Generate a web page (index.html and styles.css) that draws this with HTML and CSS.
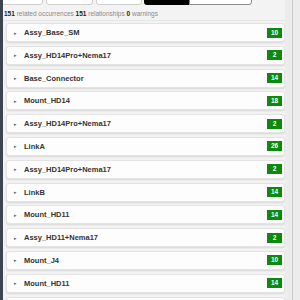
FILE: index.html
```html
<!DOCTYPE html>
<html>
<head>
<meta charset="utf-8">
<link rel="stylesheet" href="styles.css">
</head>
<body>
<div class="frame">
  <div class="main">
    <div class="toolbar">
      <div class="btn b1"></div>
      <div class="btn b2"></div>
      <div class="btn b3"></div>
      <div class="seg">
        <div class="seg-on"></div>
        <div class="seg-off"></div>
      </div>
    </div>
    <div class="summary"><b>151</b> related occurrences <b>151</b> relationships <b>0</b> warnings</div>
    <div class="list">
      <div class="card"><span class="tri">&#9656;</span><span class="name">Assy_Base_SM</span><span class="badge">10</span></div>
      <div class="card"><span class="tri">&#9656;</span><span class="name">Assy_HD14Pro+Nema17</span><span class="badge">2</span></div>
      <div class="card"><span class="tri">&#9656;</span><span class="name">Base_Connector</span><span class="badge">14</span></div>
      <div class="card"><span class="tri">&#9656;</span><span class="name">Mount_HD14</span><span class="badge">18</span></div>
      <div class="card"><span class="tri">&#9656;</span><span class="name">Assy_HD14Pro+Nema17</span><span class="badge">2</span></div>
      <div class="card"><span class="tri">&#9656;</span><span class="name">LinkA</span><span class="badge">26</span></div>
      <div class="card"><span class="tri">&#9656;</span><span class="name">Assy_HD14Pro+Nema17</span><span class="badge">2</span></div>
      <div class="card"><span class="tri">&#9656;</span><span class="name">LinkB</span><span class="badge">14</span></div>
      <div class="card"><span class="tri">&#9656;</span><span class="name">Mount_HD11</span><span class="badge">14</span></div>
      <div class="card"><span class="tri">&#9656;</span><span class="name">Assy_HD11+Nema17</span><span class="badge">2</span></div>
      <div class="card"><span class="tri">&#9656;</span><span class="name">Mount_J4</span><span class="badge">10</span></div>
      <div class="card"><span class="tri">&#9656;</span><span class="name">Mount_HD11</span><span class="badge">14</span></div>
      <div class="card"></div>
    </div>
  </div>
  <div class="rail"><div class="rail-line"></div></div>
</div>
</body>
</html>
```
FILE: styles.css
```css
html, body {
  margin: 0;
  padding: 0;
  width: 300px;
  height: 300px;
  overflow: hidden;
  background: #f3f3f3;
  font-family: "Liberation Sans", Arial, sans-serif;
}
.frame {
  display: flex;
  height: 300px;
  border-left: 3px solid #3e4350;
}
.main {
  width: 282px;
  flex: none;
  overflow: hidden;
}
.rail {
  flex: 1;
  background: #ececec;
  display: flex;
  justify-content: center;
}
.rail-line {
  width: 1px;
  background: #c9c9c9;
}
.toolbar {
  display: flex;
  gap: 3px;
  margin-top: -10px;
  height: 15px;
}
.btn {
  background: #fff;
  border: 1px solid #cfcfcf;
  border-radius: 3px;
  box-sizing: border-box;
  height: 15px;
}
.b1 { width: 43px; margin-left: -3px; }
.b2 { width: 47px; }
.b3 { width: 46px; }
.seg {
  display: flex;
  height: 15px;
  margin-left: -1px;
}
.seg-on {
  width: 45px;
  background: #000;
  border-radius: 3px 0 0 3px;
}
.seg-off {
  width: 63px;
  background: #fff;
  border: 1px solid #888;
  box-sizing: border-box;
  border-radius: 0 3px 3px 0;
}
.summary {
  font-size: 6.5px;
  color: #8a8a8a;
  padding: 5px 1px 0 1px;
  height: 16px;
  line-height: 8px;
  box-sizing: border-box;
  border-bottom: 1px solid #e6e6e6;
  margin-right: -15px;
}
.summary b { color: #222; }
.list {
  padding: 2px 0 0 3px;
}
.card {
  display: flex;
  align-items: center;
  height: 19px;
  box-sizing: border-box;
  margin-bottom: 3.8px;
  background: #fdfdfd;
  border: 1px solid #e3e3e3;
  border-radius: 3px;
  box-shadow: 0 1px 2px rgba(0,0,0,0.12);
  padding: 0 2px 0 7px;
}
.tri {
  font-size: 5px;
  color: #666;
  width: 10px;
}
.name {
  flex: 1;
  font-size: 7.5px;
  font-weight: bold;
  color: #333;
}
.badge {
  background: #0b8a0b;
  color: #fff;
  font-size: 6.5px;
  font-weight: bold;
  min-width: 15px;
  height: 10px;
  line-height: 10px;
  text-align: center;
  padding: 0 2px;
  box-sizing: border-box;
}
```
